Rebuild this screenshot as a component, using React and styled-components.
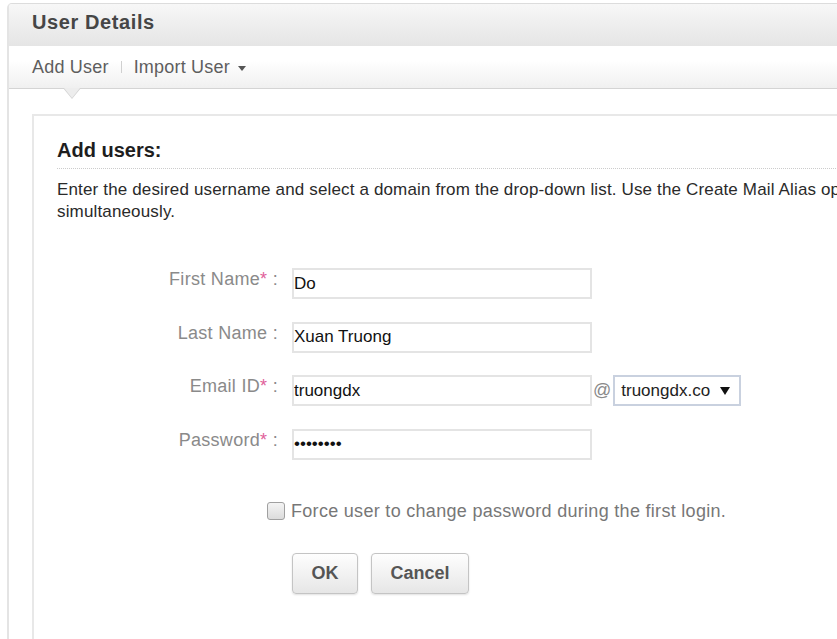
import React from "react";
import styled, { createGlobalStyle } from "styled-components";

const GlobalStyle = createGlobalStyle`
  html, body {
    margin: 0;
    padding: 0;
    background: #fff;
    overflow: hidden;
  }
  body {
    font-family: "Liberation Sans", Arial, sans-serif;
  }
`;

const Page = styled.div`
  box-sizing: border-box;
  width: 1200px;
  height: 639px;
  padding: 3px 0 0 7px;
`;

const Panel = styled.section`
  display: flex;
  flex-direction: column;
  min-height: 720px;
  border-top: 1px solid #dcdcdc;
  border-left: 2px solid #e4e4e4;
  border-top-left-radius: 5px;
`;

const Header = styled.header`
  box-sizing: border-box;
  height: 42px;
  padding: 7px 23px 0;
  border-top-left-radius: 4px;
  background: linear-gradient(#f7f7f7, #e5e5e5);
`;

const Title = styled.h2`
  margin: 0;
  font-size: 20px;
  line-height: 23px;
  font-weight: bold;
  letter-spacing: 0.6px;
  color: #464646;
`;

const TabBar = styled.nav`
  position: relative;
  box-sizing: border-box;
  height: 43px;
  display: flex;
  align-items: center;
  padding-left: 23px;
  border-bottom: 1px solid #d4d4d4;
  background: linear-gradient(#ffffff 35%, #f0f0f0);
  font-size: 18px;
  letter-spacing: 0.2px;
  color: #5e5e5e;

  &::before,
  &::after {
    content: "";
    position: absolute;
    top: 100%;
    width: 0;
    height: 0;
  }
  &::before {
    left: 54px;
    border-top: 11px solid #d2d2d2;
    border-left: 9px solid transparent;
    border-right: 9px solid transparent;
  }
  &::after {
    left: 55px;
    border-top: 10px solid #ededed;
    border-left: 8px solid transparent;
    border-right: 8px solid transparent;
  }
`;

const Tab = styled.span`
  display: inline-flex;
  align-items: center;
  cursor: pointer;
`;

const Separator = styled.span`
  width: 1px;
  height: 12px;
  margin: 0 12px;
  background: #d0d0d0;
`;

const Caret = styled.span`
  width: 0;
  height: 0;
  margin: 2px 0 0 8px;
  border-top: 5px solid #555;
  border-left: 4.5px solid transparent;
  border-right: 4.5px solid transparent;
`;

const Content = styled.div`
  flex: 1;
  display: flex;
  padding: 25px 0 0 23px;
`;

const Card = styled.div`
  flex: 1;
  padding: 23px 0 0 23px;
  border-top: 2px solid #e8e8e8;
  border-left: 2px solid #e8e8e8;
`;

const Heading = styled.h3`
  margin: 0;
  padding-bottom: 6px;
  border-bottom: 1px dotted #cccccc;
  font-size: 20px;
  line-height: 23px;
  font-weight: bold;
  color: #1e1e1e;
`;

const Intro = styled.p`
  margin: 10px 0 0;
  font-size: 17px;
  line-height: 22px;
  letter-spacing: 0.15px;
  color: #2a2a2a;
  white-space: nowrap;
`;

const Form = styled.form`
  margin-top: 45px;
`;

const Fields = styled.div`
  display: flex;
  flex-direction: column;
  gap: 22.5px;
`;

const Row = styled.div`
  display: flex;
  align-items: flex-start;
`;

const Label = styled.label`
  width: 221px;
  margin-right: 14px;
  text-align: right;
  font-size: 18px;
  line-height: 23px;
  letter-spacing: 0.3px;
  color: #8a8a8a;
  white-space: nowrap;
`;

const Req = styled.span`
  color: #e0609a;
`;

const TextInput = styled.input`
  box-sizing: border-box;
  width: 300px;
  height: 31px;
  margin: 0;
  padding: 0;
  border: 2px solid #e4e4e4;
  outline: none;
  background: #fff;
  font-family: "Liberation Sans", Arial, sans-serif;
  font-size: 17px;
  color: #111;
`;

const At = styled.span`
  margin: 0 2px 0 1px;
  font-size: 18px;
  line-height: 31px;
  color: #8a8a8a;
`;

const Select = styled.div`
  box-sizing: border-box;
  width: 128px;
  height: 31px;
  display: flex;
  align-items: center;
  justify-content: space-between;
  padding: 0 9px 0 6px;
  border: 2px solid #c9d1df;
  font-size: 17px;
  color: #222;
  cursor: pointer;
`;

const SelectArrow = styled.span`
  width: 0;
  height: 0;
  border-top: 8px solid #111;
  border-left: 5px solid transparent;
  border-right: 5px solid transparent;
`;

const CheckRow = styled.label`
  display: flex;
  align-items: center;
  gap: 6px;
  margin: 41px 0 0 210px;
  font-size: 18px;
  letter-spacing: 0.3px;
  color: #777;
`;

const Checkbox = styled.input.attrs({ type: "checkbox" })`
  appearance: none;
  flex-shrink: 0;
  width: 18px;
  height: 18px;
  margin: 0;
  border: 1px solid #a0a0a0;
  border-radius: 3px;
  background: linear-gradient(#f4f4f4, #dcdcdc);
`;

const Actions = styled.div`
  display: flex;
  gap: 13px;
  margin: 31.5px 0 0 235px;
`;

const Button = styled.button`
  height: 41px;
  padding: 0 18.5px;
  border: 1px solid #c4c4c4;
  border-radius: 4px;
  background: linear-gradient(#fefefe, #e6e6e6);
  box-shadow: 0 1px 2px rgba(0, 0, 0, 0.12);
  font-family: "Liberation Sans", Arial, sans-serif;
  font-size: 18px;
  font-weight: bold;
  color: #555;
  cursor: pointer;
`;

const fields = [
  { id: "first", label: "First Name", required: true, value: "Do" },
  { id: "last", label: "Last Name", required: false, value: "Xuan Truong" },
  { id: "email", label: "Email ID", required: true, value: "truongdx", email: true },
  { id: "pass", label: "Password", required: true, value: "12345678", type: "password" },
];

export default function App() {
  return (
    <>
      <GlobalStyle />
      <Page>
        <Panel>
          <Header>
            <Title>User Details</Title>
          </Header>
          <TabBar>
            <Tab>Add User</Tab>
            <Separator />
            <Tab>
              Import User
              <Caret />
            </Tab>
          </TabBar>
          <Content>
            <Card>
              <Heading>Add users:</Heading>
              <Intro>
                Enter the desired username and select a domain from the drop-down list. Use the Create Mail Alias option to create more email addresses for the user
                <br />
                simultaneously.
              </Intro>
              <Form onSubmit={(e) => e.preventDefault()}>
                <Fields>
                  {fields.map((f) => (
                    <Row key={f.id}>
                      <Label htmlFor={f.id}>
                        {f.label}
                        {f.required && <Req>*</Req>} :
                      </Label>
                      <TextInput
                        id={f.id}
                        type={f.type || "text"}
                        defaultValue={f.value}
                        readOnly
                      />
                      {f.email && (
                        <>
                          <At>@</At>
                          <Select>
                            truongdx.co
                            <SelectArrow />
                          </Select>
                        </>
                      )}
                    </Row>
                  ))}
                </Fields>
                <CheckRow>
                  <Checkbox />
                  Force user to change password during the first login.
                </CheckRow>
                <Actions>
                  <Button type="submit">OK</Button>
                  <Button type="button">Cancel</Button>
                </Actions>
              </Form>
            </Card>
          </Content>
        </Panel>
      </Page>
    </>
  );
}
